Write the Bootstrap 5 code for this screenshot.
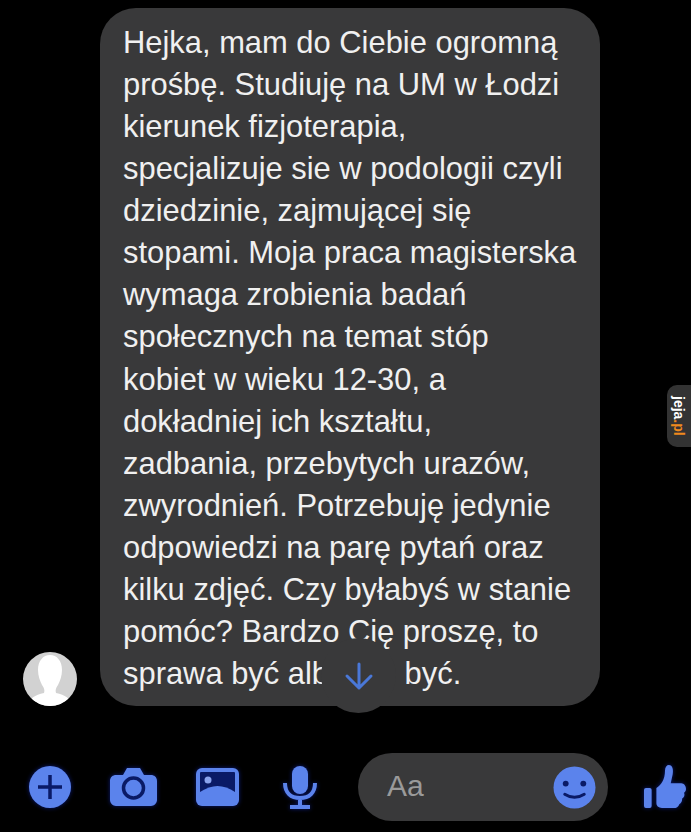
<!DOCTYPE html>
<html lang="pl">
<head>
  <meta charset="UTF-8">
  <meta name="viewport" content="width=device-width, initial-scale=1.0">
  <title>Messenger</title>
  <link href="https://cdn.jsdelivr.net/npm/bootstrap@5.3.0/dist/css/bootstrap.min.css" rel="stylesheet">
  <style>
    html, body { background: #000; }
    .chat-screen { width: 691px; height: 832px; overflow: hidden; position: relative; background: #000; font-family: "Liberation Sans", Arial, sans-serif; }
    .chat-row { padding: 8px 91px 0 23px; gap: 23px; }
    .chat-avatar { width: 54px; height: 54px; background: #d2d2d2; flex: none; overflow: hidden; }
    .chat-bubble { width: 500px; height: 698px; background: #39393a; border-radius: 36px; padding: 14px 0 0 23px; color: #f0f0f0; font-size: 30.9px; line-height: 42.07px; position: relative; white-space: nowrap; overflow: visible; }
    .scroll-down { position: absolute; left: 221px; top: 630px; width: 75px; height: 75px; background: #39393a; }
    .chat-bar { padding-left: 28px; margin-top: 46px; height: 70px; }
    .bar-icon { flex: none; display: block; filter: drop-shadow(0 0 2px #0b1b78); }
    .icon-camera { margin-left: 38px; }
    .icon-gallery { margin-left: 39px; }
    .icon-mic { margin-left: 44px; }
    .icon-like { margin-left: 36px; }
    .chat-input { width: 250px; height: 68px; margin-left: 41px; background: #39393a; padding: 0 12px 0 29px; color: #9a9a9a; font-size: 30px; flex: none; }
    .site-tab { position: absolute; right: 0; top: 385px; width: 24px; height: 62px; background: #333; border-radius: 10px 0 0 10px; }
    .site-tab-text { writing-mode: vertical-rl; font-size: 14px; font-weight: 700; color: #fff; line-height: 1; }
    .site-tab-text span { color: #f08a1d; }
  </style>
</head>
<body>
<div class="chat-screen">
  <div class="chat-row d-flex align-items-end">
    <div class="chat-avatar rounded-circle">
      <svg width="54" height="54" viewBox="0 0 54 54"><path fill="#fff" d="M6 54c0-8 6-11 15-13 1-3 0-5-2-8-2-4-4-9-4-15C15 9 20 3 27 3s12 6 12 15c0 6-2 11-4 15-2 3-3 5-2 8 9 2 15 5 15 13z"/></svg>
    </div>
    <div class="chat-bubble">
      Hejka, mam do Ciebie ogromną<br>
      prośbę. Studiuję na UM w Łodzi<br>
      kierunek fizjoterapia,<br>
      specjalizuje sie w podologii czyli<br>
      dziedzinie, zajmującej się<br>
      stopami. Moja praca magisterska<br>
      wymaga zrobienia badań<br>
      społecznych na temat stóp<br>
      kobiet w wieku 12-30, a<br>
      dokładniej ich kształtu,<br>
      zadbania, przebytych urazów,<br>
      zwyrodnień. Potrzebuję jedynie<br>
      odpowiedzi na parę pytań oraz<br>
      kilku zdjęć. Czy byłabyś w stanie<br>
      pomóc? Bardzo Cię proszę, to<br>
      sprawa być albo nie być.
      <div class="scroll-down rounded-circle d-flex align-items-center justify-content-center">
        <svg class="ms-n1" width="30" height="30" viewBox="0 0 30 30"><path fill="none" stroke="#4a78d8" stroke-width="3" stroke-linecap="round" stroke-linejoin="round" d="M15 3v24M3 15l12 12 12-12"/></svg>
      </div>
    </div>
  </div>
  <div class="chat-bar d-flex align-items-center">
    <svg class="bar-icon" width="44" height="44" viewBox="0 0 44 44"><circle cx="22" cy="22" r="21" fill="#5b83ec"/><path stroke="#0a1a66" stroke-width="3.5" d="M22 10v24M10 22h24"/></svg>
    <svg class="bar-icon icon-camera" width="47" height="38" viewBox="0 0 47 38"><path fill="#5b83ec" d="M6 7h7l4-7h13l4 7h7c3 0 6 2 6 6v19c0 3-3 6-6 6H6c-3 0-6-3-6-6V13c0-4 3-6 6-6z"/><circle cx="23.5" cy="20" r="10" fill="none" stroke="#0a1a66" stroke-width="3.5"/></svg>
    <svg class="bar-icon icon-gallery" width="43" height="38" viewBox="0 0 43 38"><rect width="43" height="38" rx="6" fill="#5b83ec"/><rect x="4" y="4" width="35" height="26" rx="1" fill="#0a1a66"/><circle cx="12" cy="12" r="3.5" fill="#8aa3ee"/><path fill="#5b83ec" d="M4 24c6-4 12-6 17.500-6s12 2 17.500 6v10H4z"/></svg>
    <svg class="bar-icon icon-mic" width="34" height="43" viewBox="0 0 34 43"><rect x="9" y="0" width="16" height="28" rx="8" fill="#5b83ec"/><path fill="none" stroke="#5b83ec" stroke-width="4" d="M2 17c0 10 6 15 15 15s15-5 15-15M17 32v8"/><path stroke="#5b83ec" stroke-width="4" d="M7 41h20"/></svg>
    <div class="chat-input rounded-pill d-flex align-items-center justify-content-between">
      <span class="mb-1">Aa</span>
      <svg width="43" height="43" viewBox="0 0 44 44"><circle cx="22" cy="22" r="21.500" fill="#5b83ec"/><circle cx="13" cy="18" r="3" fill="#0a1a66"/><circle cx="31" cy="18" r="3" fill="#0a1a66"/><path fill="none" stroke="#0a1a66" stroke-width="3" stroke-linecap="round" d="M12 29c6 4 14 4 20 0"/></svg>
    </div>
    <svg class="bar-icon icon-like" width="42" height="46" viewBox="0 0 44 46"><rect x="0" y="24" width="8" height="21" rx="2" fill="#5b83ec"/><path fill="#5b83ec" d="M13 24c5-3 9-9 9-18 0-4 2-6 4-6 4 0 5 5 4 10l-2 9h11c3 0 5 3 5 6 0 2-1 3-2 4 1 3 0 5-2 6 0 3-1 5-3 6-1 3-3 4-6 4H20c-3 0-7-1-7-5z"/></svg>
  </div>
  <div class="site-tab d-flex align-items-center justify-content-center">
    <div class="site-tab-text">jeja<span>.pl</span></div>
  </div>
</div>
<script src="https://cdn.jsdelivr.net/npm/bootstrap@5.3.0/dist/js/bootstrap.bundle.min.js"></script>
</body>
</html>
